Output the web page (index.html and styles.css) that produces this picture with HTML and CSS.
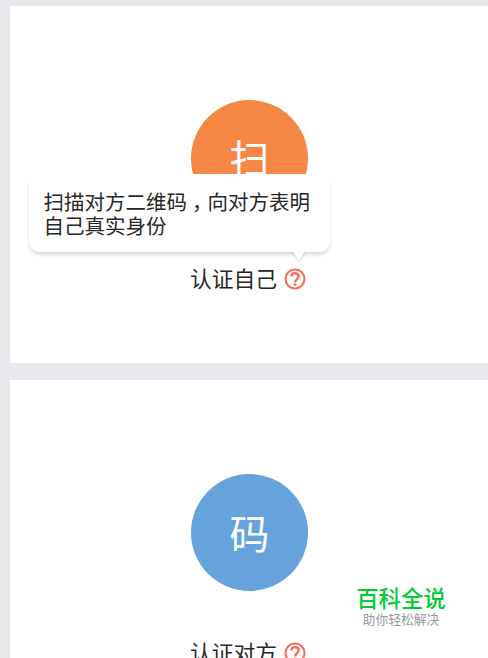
FILE: index.html
```html
<!DOCTYPE html>
<html lang="zh-CN">

    <head>
        <meta charset="utf-8">
        <title>身份认证</title>
        <link rel="stylesheet" href="styles.css">
    </head>

    <body>
        <div class="page">
            <div class="card">
                <div class="circle scan">扫</div>
                <div class="label">
                    <span>认证自己</span>
                    <svg class="help" viewBox="0 0 22 22">
                        <circle cx="11" cy="11" r="9.5"/>
                        <path d="M7.4 8.6C7.4 6.3 9 5.2 11 5.2s3.7 1.2 3.7 3.3c0 2.5-3.5 2.9-3.5 5.7"/>
                        <path d="M11.2 15.4v2.4"/>
                    </svg>
                </div>
                <div class="tip">扫描对方二维码<span class="comma">，</span>向对方表明<br>自己真实身份
                    <svg class="arrow" viewBox="0 0 12 11"><path d="M0 0h12L6 10.5z"/></svg>
                </div>
            </div>
            <div class="card">
                <div class="circle code">码</div>
                <div class="label">
                    <span>认证对方</span>
                    <svg class="help" viewBox="0 0 22 22">
                        <circle cx="11" cy="11" r="9.5"/>
                        <path d="M7.4 8.6C7.4 6.3 9 5.2 11 5.2s3.7 1.2 3.7 3.3c0 2.5-3.5 2.9-3.5 5.7"/>
                        <path d="M11.2 15.4v2.4"/>
                    </svg>
                </div>
            </div>
        </div>
        <div class="mark">
            <div class="mark-name">百科全说</div>
            <div class="mark-text">助你轻松解决</div>
        </div>
    </body>

</html>
```

FILE: styles.css
```css
        html,
        body {
            height: 100%;
            margin: 0;
            overflow: hidden;
        }

        body {
            position: relative;
            background: #e7e8ec;
            color: #272727;
            font-family: "Noto Sans CJK SC", sans-serif;
        }

        .page {
            display: flex;
            flex-direction: column;
            gap: 17px;
            padding: 6px 0 0 10px;
        }

        .card {
            position: relative;
            display: flex;
            flex-direction: column;
            align-items: center;
            box-sizing: border-box;
            height: 357px;
            padding: 94px 0 0 1px;
            background: #fff;
        }

        .circle {
            width: 117px;
            height: 117px;
            border-radius: 50%;
            color: #fff;
            font-size: 40px;
            line-height: 117px;
            text-align: center;
        }

        .scan {
            background: #f78745;
            line-height: 115px;
        }

        .code {
            background: #66a2dc;
        }

        .label {
            display: flex;
            align-items: flex-start;
            gap: 7px;
            height: 30px;
            margin-top: 46px;
            padding-right: 3px;
            font-size: 21.8px;
            line-height: 30px;
        }

        .help {
            width: 22px;
            height: 22px;
            margin-top: 5px;
            fill: none;
            stroke: #fa6757;
            stroke-width: 2;
        }

        .help path {
            stroke-width: 2.3;
        }

        /* hint bubble over the first card */
        .tip {
            position: absolute;
            left: 19px;
            top: 168px;
            box-sizing: border-box;
            width: 301px;
            height: 78px;
            padding: 15px 0 0 14.5px;
            border-radius: 10px;
            background: #fff;
            box-shadow: 0 3px 4px -1px rgba(0, 0, 0, .2);
            font-size: 20.5px;
            line-height: 24px;
            white-space: nowrap;
        }

        .comma {
            position: relative;
            left: 5px;
        }

        .arrow {
            position: absolute;
            left: 264px;
            top: 77px;
            width: 12px;
            height: 11px;
            fill: #fff;
            filter: drop-shadow(0 1px 1px rgba(0, 0, 0, .2));
        }

        .mark {
            position: absolute;
            left: 356px;
            top: 583px;
            width: 90px;
            text-align: center;
        }

        .mark-name {
            color: #0c3;
            font-size: 22.4px;
            font-weight: 500;
            line-height: 28px;
        }

        .mark-text {
            color: #999;
            font-size: 12.8px;
            line-height: 15px;
        }
```
